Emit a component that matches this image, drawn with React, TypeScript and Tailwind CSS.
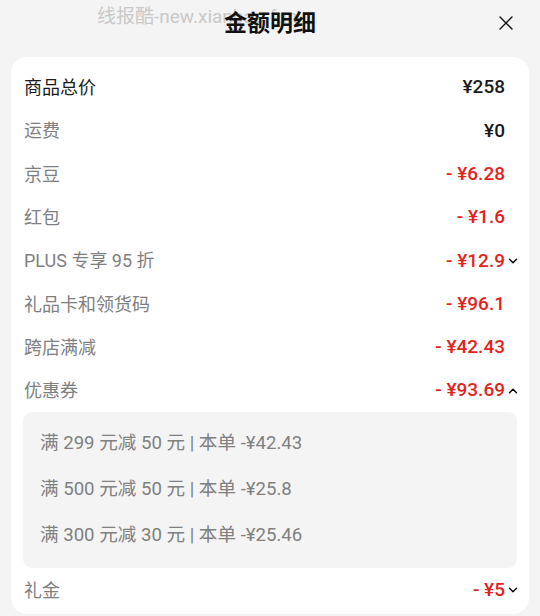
import { ChevronDown, ChevronUp, X } from "lucide-react";

type Row = {
  label: string;
  value: string;
  red?: boolean;
  dark?: boolean;
  chevron?: "down" | "up";
};

const rows: Row[] = [
  { label: "商品总价", value: "¥258", dark: true },
  { label: "运费", value: "¥0" },
  { label: "京豆", value: "- ¥6.28", red: true },
  { label: "红包", value: "- ¥1.6", red: true },
  { label: "PLUS 专享 95 折", value: "- ¥12.9", red: true, chevron: "down" },
  { label: "礼品卡和领货码", value: "- ¥96.1", red: true },
  { label: "跨店满减", value: "- ¥42.43", red: true },
  { label: "优惠券", value: "- ¥93.69", red: true, chevron: "up" },
];

const coupons = [
  "满 299 元减 50 元 | 本单 -¥42.43",
  "满 500 元减 50 元 | 本单 -¥25.8",
  "满 300 元减 30 元 | 本单 -¥25.46",
];

function PriceRow({ row }: { row: Row }) {
  return (
    <div className="flex h-[43.3px] items-center justify-between pl-[13px] pr-[24px]">
      <span
        className={`text-[18px] ${row.dark ? "text-[#1a1a1a]" : "text-[#7f7f7f]"}`}
      >
        {row.label}
      </span>
      <span className="relative flex items-center">
        <span
          className={`text-[19px] font-medium ${row.red ? "text-[#e3231b]" : "text-[#1a1a1a]"}`}
        >
          {row.value}
        </span>
        {row.chevron === "down" && (
          <ChevronDown
            className="absolute left-full ml-[1px] h-[14px] w-[14px] text-black"
            strokeWidth={2.4}
          />
        )}
        {row.chevron === "up" && (
          <ChevronUp
            className="absolute left-full ml-[1px] h-[14px] w-[14px] text-black"
            strokeWidth={2.4}
          />
        )}
      </span>
    </div>
  );
}

export default function App() {
  return (
    <div className="h-[616px] w-[540px] overflow-hidden bg-[#f4f4f4] font-['Roboto','Noto_Sans_CJK_SC',sans-serif]">
      <div className="relative flex h-[57px] items-start justify-center pt-[8px]">
        <span className="absolute left-[97px] top-[3px] text-[19px] text-[#c9c9c9]">
          线报酷-new.xianbao.fun
        </span>
        <h1 className="relative text-[23px] font-bold leading-[32px] text-[#111]">
          金额明细
        </h1>
        <X
          className="absolute right-[22px] top-[11px] h-[24px] w-[24px] text-[#111]"
          strokeWidth={1.4}
        />
      </div>
      <div className="mx-[11px] h-[557px] rounded-[16px] bg-white pt-[9px]">
        {rows.map((row) => (
          <PriceRow key={row.label} row={row} />
        ))}
        <div className="mx-[12px] rounded-[9px] bg-[#f4f4f4] py-[9px] pl-[17px]">
          {coupons.map((c) => (
            <div
              key={c}
              className="flex h-[46px] items-center text-[18.6px] text-[#808080]"
            >
              {c}
            </div>
          ))}
        </div>
        <PriceRow
          row={{ label: "礼金", value: "- ¥5", red: true, chevron: "down" }}
        />
      </div>
    </div>
  );
}
